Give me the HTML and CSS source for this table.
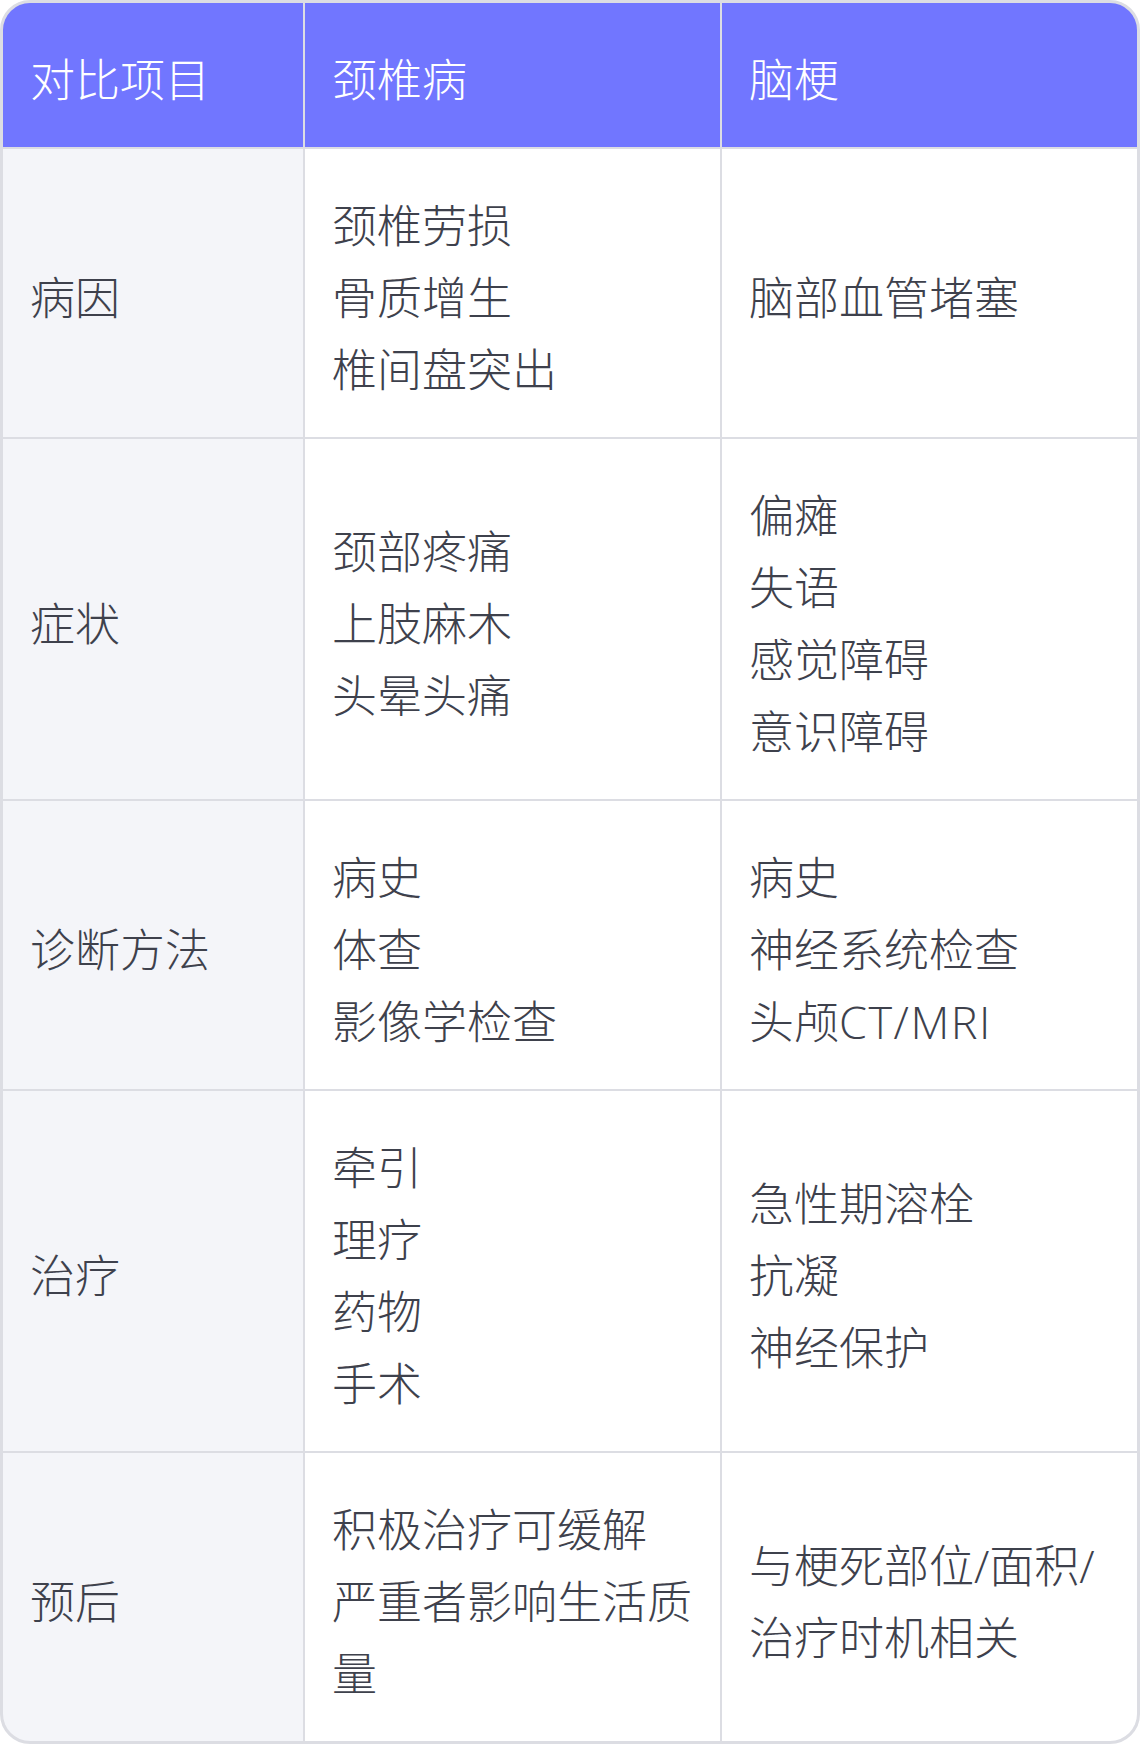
FILE: index.html
```html
<!DOCTYPE html>
<html lang="zh-CN">
<head>
<meta charset="utf-8">
<title>颈椎病与脑梗对比</title>
<link rel="stylesheet" href="styles.css">
</head>
<body>
<div class="compare">
  <div class="cell head">对比项目</div>
  <div class="cell head">颈椎病</div>
  <div class="cell head">脑梗</div>

  <div class="cell label">病因</div>
  <div class="cell">颈椎劳损<br>骨质增生<br>椎间盘突出</div>
  <div class="cell">脑部血管堵塞</div>

  <div class="cell label">症状</div>
  <div class="cell">颈部疼痛<br>上肢麻木<br>头晕头痛</div>
  <div class="cell">偏瘫<br>失语<br>感觉障碍<br>意识障碍</div>

  <div class="cell label">诊断方法</div>
  <div class="cell">病史<br>体查<br>影像学检查</div>
  <div class="cell">病史<br>神经系统检查<br><span>头颅<span class="latin">CT/MRI</span></span></div>

  <div class="cell label">治疗</div>
  <div class="cell">牵引<br>理疗<br>药物<br>手术</div>
  <div class="cell">急性期溶栓<br>抗凝<br>神经保护</div>

  <div class="cell label">预后</div>
  <div class="cell">积极治疗可缓解<br>严重者影响生活质量</div>
  <div class="cell">与梗死部位/面积/治疗时机相关</div>
</div>
</body>
</html>
```

FILE: styles.css
```css
html, body {
  margin: 0;
  padding: 0;
  background: #ffffff;
}

.compare {
  box-sizing: border-box;
  width: 1140px;
  display: grid;
  grid-template-columns: 300px 415px 415px;
  gap: 2px;
  background: #dcdde3;
  border: 3px solid #dcdde3;
  border-radius: 30px;
  overflow: hidden;
  font-family: "Open Sans", "Noto Sans CJK SC", "Noto Sans", sans-serif;
  font-weight: 300;
  font-size: 45px;
  line-height: 72px;
  color: #3e414c;
}

.cell {
  background: #ffffff;
  padding: 41px 28px 31px 27px;
  display: flex;
  flex-direction: column;
  justify-content: center;
}

.cell.head {
  background: #7176ff;
  color: #ffffff;
}

.cell.label {
  background: #f4f5f9;
}

.latin {
  letter-spacing: 1.5px;
}
```
